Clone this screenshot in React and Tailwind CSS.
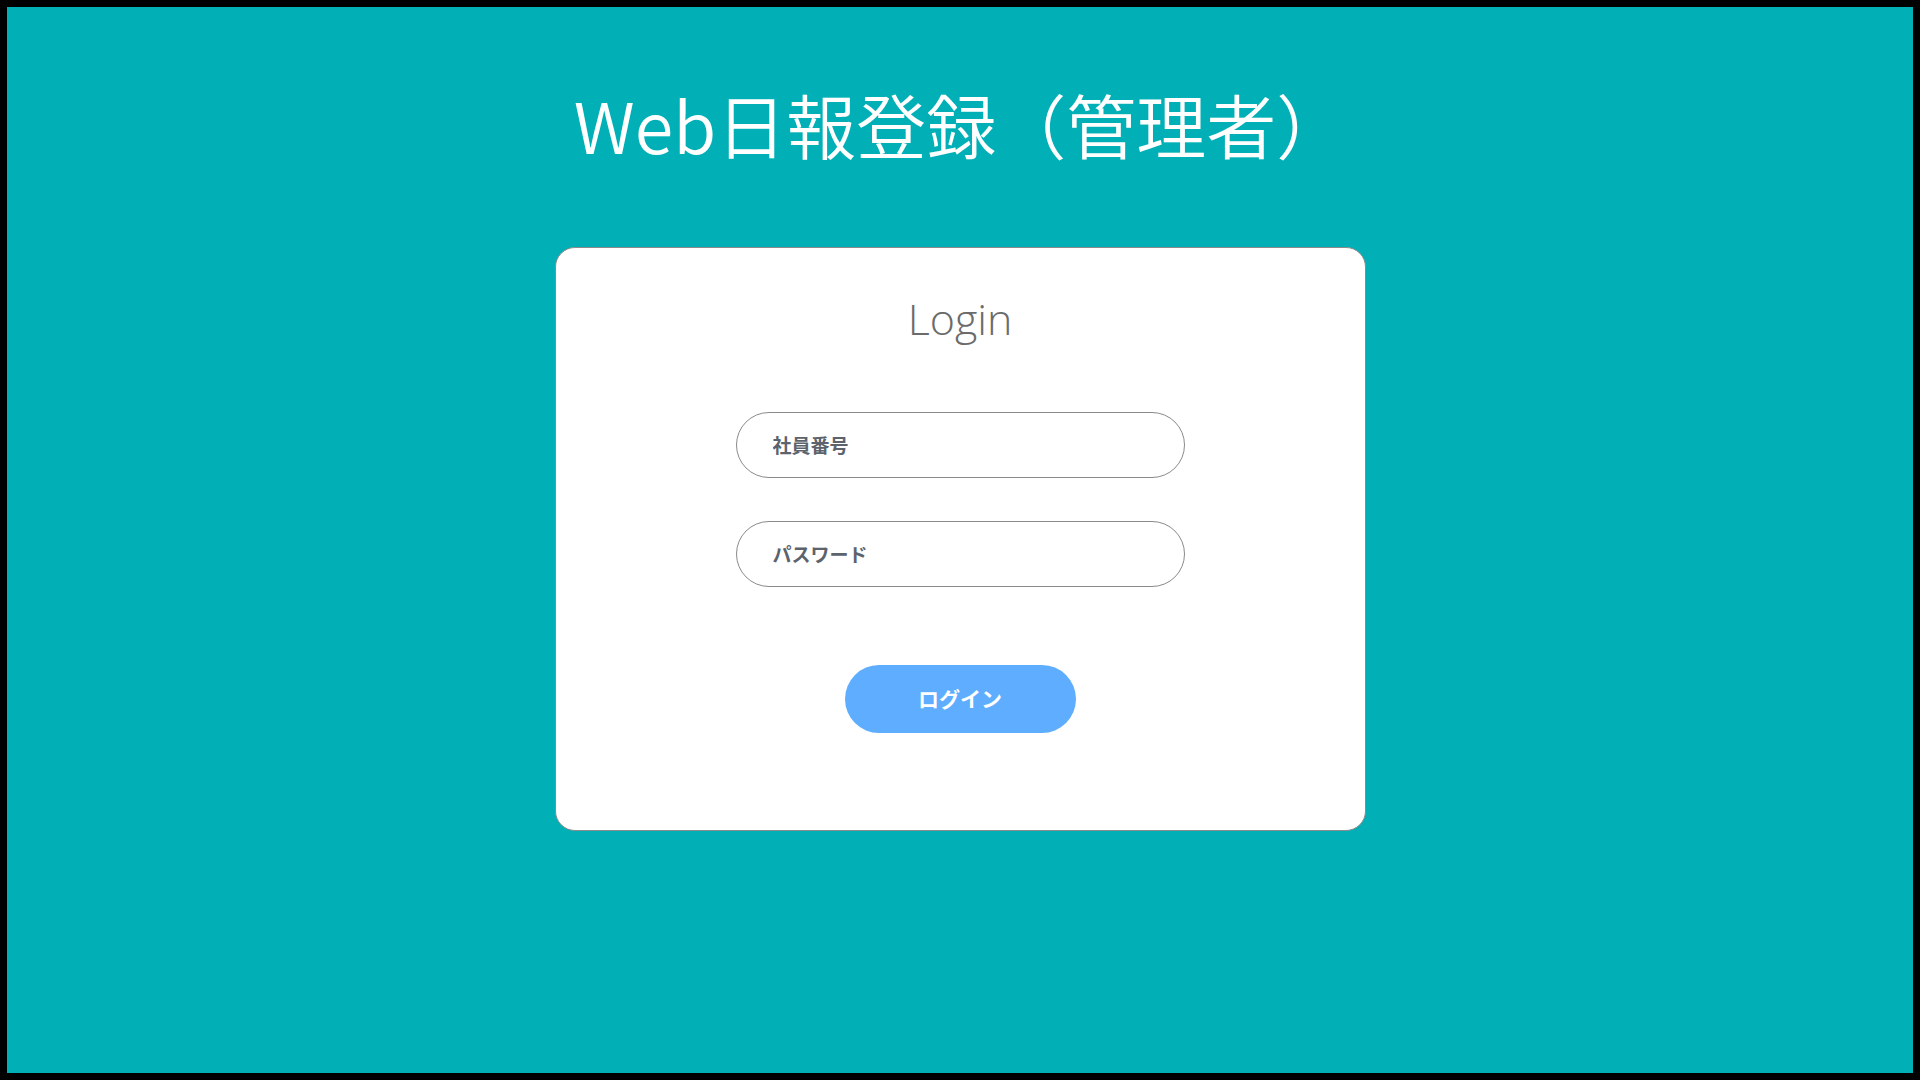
import React, { useState } from "react";

const jp = { fontFamily: '"Noto Sans CJK JP", "Noto Sans", sans-serif' };

const App = () => {
  const [form, setForm] = useState({ shain: "", password: "" });

  const handleChange = (e) => {
    const { name, value } = e.target;
    setForm((prev) => ({ ...prev, [name]: value }));
  };

  return (
    <div className="h-screen w-full bg-black p-[7px]" style={jp}>
      <div className="flex h-full w-full flex-col items-center bg-[#00b0b6]">
        <h1 className="mt-[82px] text-[70px] font-[350] leading-none text-white">
          Web日報登録（管理者）
        </h1>

        {/* ログインカード */}
        <div className="mt-[88px] flex h-[584px] w-[811px] flex-col items-center rounded-[20px] border border-[#8a8a8a] bg-white">
          <h2
            className="mt-[45px] text-[43px] font-light leading-[1.2] text-[#6b6b6b]"
            style={{ fontFamily: '"Open Sans", "Noto Sans", sans-serif' }}
          >
            Login
          </h2>

          <div className="mt-[67px] flex flex-col gap-[43px]">
            <input
              name="shain"
              value={form.shain}
              onChange={handleChange}
              placeholder="社員番号"
              className="h-[66px] w-[449px] rounded-full border border-[#8a8a8a] bg-white px-[36px] text-[19px] font-semibold text-[#5c636c] outline-none placeholder:text-[#5c636c]"
            />
            <input
              name="password"
              type="password"
              value={form.password}
              onChange={handleChange}
              placeholder="パスワード"
              className="h-[66px] w-[449px] rounded-full border border-[#8a8a8a] bg-white px-[36px] text-[19px] font-semibold text-[#5c636c] outline-none placeholder:text-[#5c636c]"
            />
          </div>

          <button
            type="button"
            className="mt-[78px] h-[68px] w-[231px] rounded-full bg-[#5eadff] text-[21px] font-bold text-white"
          >
            ログイン
          </button>
        </div>
      </div>
    </div>
  );
};

export default App;
